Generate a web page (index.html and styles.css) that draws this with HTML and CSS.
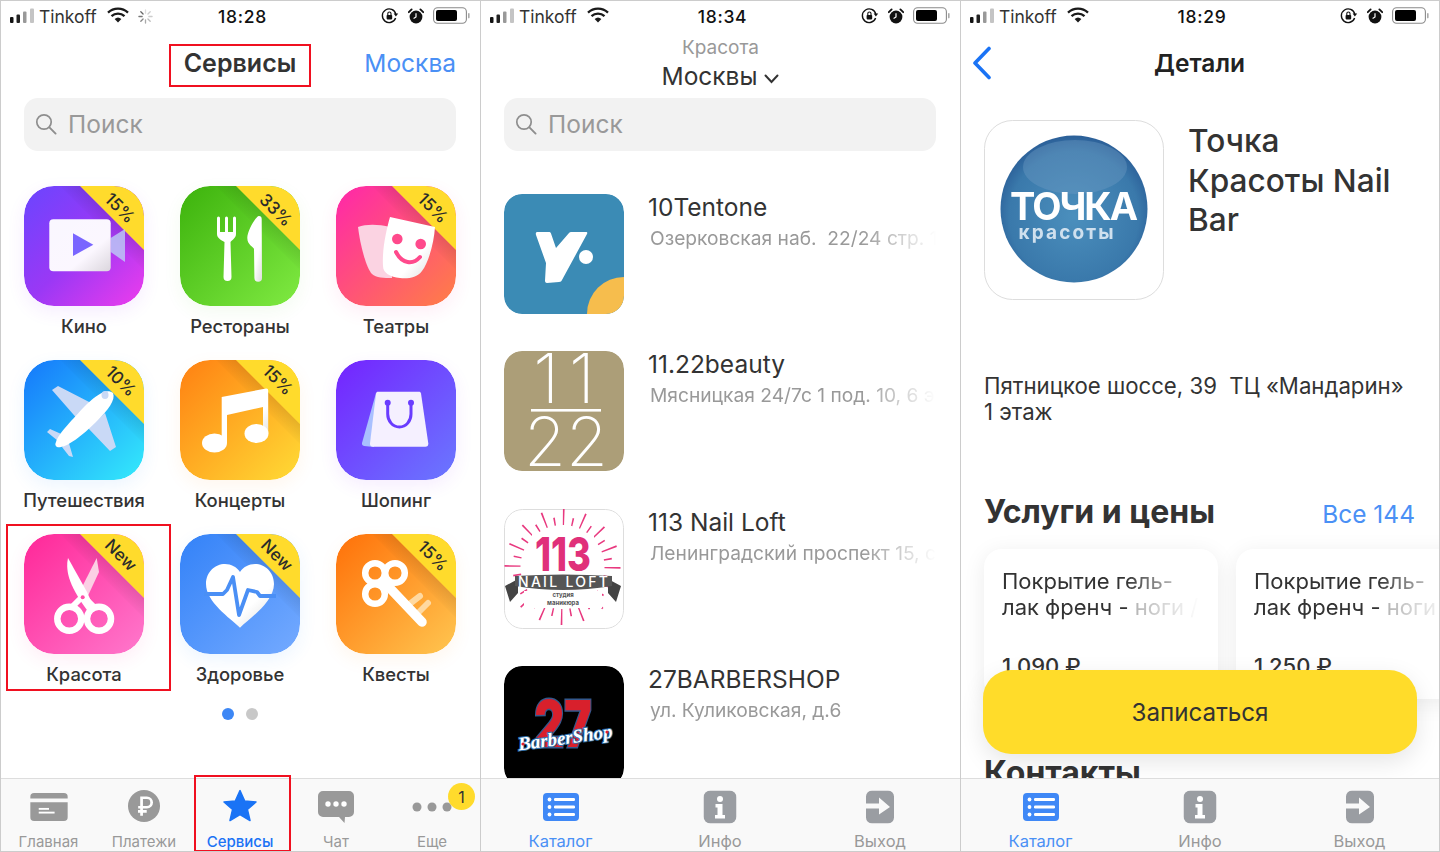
FILE: index.html
```html
<!DOCTYPE html>
<html lang="ru">
<head>
<meta charset="utf-8">
<title>Сервисы</title>
<link rel="stylesheet" href="styles.css">
</head>
<body>
<svg class="defs" width="0" height="0">
  <defs>
    <linearGradient id="gKino" x1="0" y1="0" x2="1" y2="1"><stop offset="0" stop-color="#6a45ff"/><stop offset=".5" stop-color="#9a38f5"/><stop offset="1" stop-color="#ee3cec"/></linearGradient>
    <linearGradient id="gRest" x1="0" y1="0" x2="1" y2="1"><stop offset="0" stop-color="#3cb20c"/><stop offset="1" stop-color="#80ea42"/></linearGradient>
    <linearGradient id="gTeat" x1="0" y1="0" x2="1" y2="1"><stop offset="0" stop-color="#ff26ab"/><stop offset="1" stop-color="#ff7f45"/></linearGradient>
    <linearGradient id="gTrav" x1="0" y1="0" x2="1" y2="1"><stop offset="0" stop-color="#1577fb"/><stop offset="1" stop-color="#34ebfb"/></linearGradient>
    <linearGradient id="gConc" x1="0" y1="0" x2="1" y2="1"><stop offset="0" stop-color="#ff8012"/><stop offset="1" stop-color="#ffdb35"/></linearGradient>
    <linearGradient id="gShop" x1="0" y1="0" x2="1" y2="1"><stop offset="0" stop-color="#7423ff"/><stop offset="1" stop-color="#6a78ff"/></linearGradient>
    <linearGradient id="gBeau" x1="0" y1="0" x2="1" y2="1"><stop offset="0" stop-color="#ff2798"/><stop offset="1" stop-color="#ff78cc"/></linearGradient>
    <linearGradient id="gHeal" x1="0" y1="0" x2="1" y2="1"><stop offset="0" stop-color="#3382f8"/><stop offset="1" stop-color="#74aaff"/></linearGradient>
    <linearGradient id="gQuest" x1="0" y1="0" x2="1" y2="1"><stop offset="0" stop-color="#ff7008"/><stop offset="1" stop-color="#ffc650"/></linearGradient>
    <linearGradient id="gSheen" x1="0" y1="0" x2="1" y2="1"><stop offset="0" stop-color="#fff"/><stop offset=".65" stop-color="#fff"/><stop offset="1" stop-color="#dcdcdc"/></linearGradient>
    <linearGradient id="gShade" gradientUnits="userSpaceOnUse" x1="88" y1="32" x2="76" y2="44"><stop offset="0" stop-color="#000" stop-opacity=".1"/><stop offset="1" stop-color="#000" stop-opacity="0"/></linearGradient>
    <radialGradient id="gBall" cx=".5" cy=".55" r=".55"><stop offset="0" stop-color="#4b8fbd"/><stop offset=".8" stop-color="#3a79ab"/><stop offset="1" stop-color="#2b5f98"/></radialGradient>

    <g id="corner">
      <path d="M36 0 120 84V64L56 0z" fill="url(#gShade)"/>
      <path d="M56 0h64v64z" fill="#ffdb2c"/>
    </g>

    <symbol id="sbar" viewBox="0 0 480 30">
      <rect x="9" y="16" width="3.500" height="6" rx="1" fill="#111"/>
      <rect x="15.500" y="13.500" width="3.500" height="8.500" rx="1" fill="#222"/>
      <rect x="22" y="10.500" width="3.500" height="11.500" rx="1" fill="#999"/>
      <rect x="29" y="7.500" width="4" height="14.500" rx="1" fill="#c4c4c4"/>
    </symbol>
    <symbol id="wifi" viewBox="0 0 22 16">
      <g fill="none" stroke="#1a1a1a" stroke-width="2.300">
        <path d="M1 5.600a14.500 14.500 0 0 1 20 0"/>
        <path d="M4.500 9.200a9.500 9.500 0 0 1 13 0"/>
      </g>
      <path d="M7.600 12a5 5 0 0 1 6.800 0L11 15.600z" fill="#1a1a1a"/>
    </symbol>
    <symbol id="spin" viewBox="0 0 16 16">
      <g stroke-width="1.400" stroke-linecap="round">
        <path d="M8 1v3.400" stroke="#ddd"/><path d="M13 3l-2.400 2.400" stroke="#ccc"/><path d="M15 8h-3.400" stroke="#ccc"/><path d="M13 13l-2.400-2.400" stroke="#bbb"/>
        <path d="M8 15v-3.400" stroke="#aaa"/><path d="M3 13l2.400-2.400" stroke="#888"/><path d="M1 8h3.400" stroke="#777"/><path d="M3 3l2.400 2.400" stroke="#666"/>
      </g>
    </symbol>
    <symbol id="rot" viewBox="0 0 18 18">
      <path d="M14.800 7.200A6.800 6.800 0 1 0 14.600 11" fill="none" stroke="#111" stroke-width="1.400"/>
      <path d="M12.600 6.600h4.600l-2.300 3z" fill="#111"/>
      <rect x="5.600" y="8" width="5.600" height="4.400" rx=".8" fill="#111"/>
      <path d="M6.800 8V6.600a1.600 1.600 0 0 1 3.200 0V8" fill="none" stroke="#111" stroke-width="1.100"/>
    </symbol>
    <symbol id="alarm" viewBox="0 0 16 16">
      <circle cx="8" cy="9" r="6.400" fill="#111"/>
      <path d="M8 5.200V9l-2.400 1.400" fill="none" stroke="#fff" stroke-width="1.200"/>
      <path d="M.8 4.200 3.600 1.400M15.200 4.200 12.400 1.400" stroke="#111" stroke-width="1.800" stroke-linecap="round"/>
    </symbol>
    <symbol id="batt" viewBox="0 0 38 18">
      <rect x=".6" y=".8" width="32.800" height="15.400" rx="4" fill="none" stroke="#8a8a8a" stroke-width="1.100"/>
      <rect x="3" y="3" width="21" height="11" rx="2" fill="#000"/>
      <rect x="35" y="6" width="1.600" height="5.400" rx=".8" fill="#aaa"/>
    </symbol>
    <symbol id="search" viewBox="0 0 22 22">
      <circle cx="9" cy="9" r="7.200" fill="none" stroke="#8e8e8e" stroke-width="1.700"/>
      <path d="M14.400 14.400 20.600 20.600" stroke="#8e8e8e" stroke-width="1.900" stroke-linecap="round"/>
    </symbol>
    <symbol id="catalog" viewBox="0 0 36 28">
      <rect width="36" height="28" rx="4" fill="#3f88f6"/>
      <g fill="#fff">
        <rect x="11" y="5" width="21" height="3" rx="1.200"/><rect x="11" y="12.500" width="21" height="3" rx="1.200"/><rect x="11" y="20" width="21" height="3" rx="1.200"/>
        <circle cx="6.500" cy="6.500" r="1.900"/><circle cx="6.500" cy="14" r="1.900"/><circle cx="6.500" cy="21.500" r="1.900"/>
      </g>
    </symbol>
    <symbol id="info" viewBox="0 0 33 33">
      <rect width="33" height="33" rx="7" fill="#9a9da2"/>
      <circle cx="16.500" cy="8.500" r="3" fill="#fff"/>
      <path d="M12 13.500h7v11h2.500v3.500H11.500v-3.500H14v-7.600h-2z" fill="#fff"/>
    </symbol>
    <symbol id="exit" viewBox="0 0 28 33">
      <path d="M6 0h16a6 6 0 0 1 6 6v21a6 6 0 0 1-6 6H6a6 6 0 0 1-6-6v-9h13v6l11-7.500L13 7v6H0V6a6 6 0 0 1 6-6z" fill="#9a9da2"/>
    </symbol>
    <clipPath id="rr"><rect width="120" height="120" rx="18"/></clipPath>
    <clipPath id="rrApp"><rect width="120" height="120" rx="30"/></clipPath>
  </defs>
</svg>

<div class="screens">

  <section class="phone">
    <div class="status">
      <div class="status-left">
        <svg class="s-signal" viewBox="0 0 34 30"><use href="#sbar" width="480" height="30"/></svg>
        <span>Tinkoff</span>
        <svg class="s-wifi"><use href="#wifi"/></svg>
        <svg class="s-spin"><use href="#spin"/></svg>
      </div>
      <div class="status-time">18:28</div>
      <div class="status-right">
        <svg class="s-rot"><use href="#rot"/></svg>
        <svg class="s-alarm"><use href="#alarm"/></svg>
        <svg class="s-batt"><use href="#batt"/></svg>
      </div>
    </div>
    <header class="nav">
      <span></span>
      <h1 class="nav-title">Сервисы</h1>
      <a class="nav-link">Москва</a>
    </header>
    <main class="body">
      <div class="search"><svg class="search-ico"><use href="#search"/></svg><span>Поиск</span></div>
      <div class="apps">
        <div class="app glow-violet">
          <svg class="app-ico" viewBox="0 0 120 120"><g clip-path="url(#rrApp)"><rect width="120" height="120" fill="url(#gKino)"/>
            <use href="#corner"/>
            <path d="M86.700 52 101 43v33L86.700 66z" fill="#bcd0f5" opacity=".8"/>
            <rect x="25.300" y="33.300" width="61.400" height="52" rx="4" fill="url(#gSheen)" opacity=".96"/>
            <path d="M49 47.300 69.300 58.700 49 70z" fill="#7a66ff"/></g>
            <text class="ribbon" transform="translate(95 23) rotate(45)">15%</text></svg>
          <div class="app-name">Кино</div>
        </div>
        <div class="app glow-green">
          <svg class="app-ico" viewBox="0 0 120 120"><g clip-path="url(#rrApp)"><rect width="120" height="120" fill="url(#gRest)"/>
            <use href="#corner"/>
            <path d="M37 32a1.500 1.500 0 0 1 3 0v14h5V32a1.500 1.500 0 0 1 3 0v14h5V32a1.500 1.500 0 0 1 3 0v16c0 4-4 6-5.500 8l1 35a4 4 0 0 1-8 0l1-35C41 54 37 52 37 48z" fill="#fff"/>
            <path d="M79 30c1.800 0 2.700 1.200 2.700 3l.3 59a3.800 3.800 0 0 1-7.600 0l-.4-29c-.1-2-6.700-4-6.700-11 0-7 8.500-22 11.700-22z" fill="url(#gSheen)"/></g>
            <text class="ribbon" transform="translate(95 25) rotate(45)">33%</text></svg>
          <div class="app-name">Рестораны</div>
        </div>
        <div class="app glow-pink">
          <svg class="app-ico" viewBox="0 0 120 120"><g clip-path="url(#rrApp)"><rect width="120" height="120" fill="url(#gTeat)"/>
            <use href="#corner"/>
            <path d="M22 41c8-3 20-3 32 0l2 51c-8 0-16 0-20-4-6-6-12-30-14-47z" fill="#fbd3e2"/>
            <path d="M54 31c15 3 30 7 45 10-1 15-6 35-13 44-5 7-15 8-22 7-10-1-17-5-17-12-1-16 3-35 7-49z" fill="url(#gSheen)"/>
            <circle cx="61.300" cy="53" r="5.300" fill="#ff4a8c"/><circle cx="84.700" cy="58" r="5.300" fill="#ff4a8c"/>
            <path d="M60 66c6 12 17 13 24 5" fill="none" stroke="#ff4a8c" stroke-width="4" stroke-linecap="round"/></g>
            <text class="ribbon" transform="translate(96 23) rotate(45)">15%</text></svg>
          <div class="app-name">Театры</div>
        </div>
        <div class="app glow-blue">
          <svg class="app-ico" viewBox="0 0 120 120"><g clip-path="url(#rrApp)"><rect width="120" height="120" fill="url(#gTrav)"/>
            <use href="#corner"/>
            <path d="M28 30l6-4 37 19-15 17zM81 53l11 34-6 4-22-23zM23 72l3-3 18 8-5 8zM44 80l5 17-4-1-7-9z" fill="#c9d9f6"/>
            <path d="M89 33C92 40 84 50 72 62 58 76 44 86 37 87 33 88 30 86 32 82 34 74 50 58 60 47 70 37 82 27 89 33z" fill="url(#gSheen)"/>
            <ellipse cx="81" cy="35" rx="3.500" ry="4" fill="#c9d9f6"/></g>
            <text class="ribbon" transform="translate(96 22) rotate(45)">10%</text></svg>
          <div class="app-name">Путешествия</div>
        </div>
        <div class="app glow-orange">
          <svg class="app-ico" viewBox="0 0 120 120"><g clip-path="url(#rrApp)"><rect width="120" height="120" fill="url(#gConc)"/>
            <use href="#corner"/>
            <path d="M41.700 37 86 28.500c1.500-.2 2.200.8 2.200 2V73H83V47L47 55v28h-5.300z" fill="url(#gSheen)"/>
            <ellipse cx="34.500" cy="83" rx="12.500" ry="9.500" fill="#fff"/><ellipse cx="76.500" cy="73.500" rx="12" ry="9.500" fill="#fff"/></g>
            <text class="ribbon" transform="translate(97 21) rotate(45)">15%</text></svg>
          <div class="app-name">Концерты</div>
        </div>
        <div class="app glow-violet">
          <svg class="app-ico" viewBox="0 0 120 120"><g clip-path="url(#rrApp)"><rect width="120" height="120" fill="url(#gShop)"/>
            <path d="M40 33 26 83c-.3 1.500.5 2.500 2 3l10 1z" fill="#a9c0ff"/>
            <path d="M42 31.700h41c1 0 1.800.6 2 1.700l7.300 50c.2 2-1 3.300-3 3.300H37c-2 0-3.200-1.300-3-3.300l6-50c.2-1 1-1.700 2-1.700z" fill="#f5f0ff"/>
            <path d="M51.700 42.700V54c0 7 5 13 11.700 13S75 61 75 54V42.700" fill="none" stroke="#6a3cff" stroke-width="3"/>
            <circle cx="51.700" cy="42.700" r="3" fill="#6a3cff"/><circle cx="75" cy="42.700" r="3" fill="#6a3cff"/></g></svg>
          <div class="app-name">Шопинг</div>
        </div>
        <div class="app glow-pink">
          <svg class="app-ico" viewBox="0 0 120 120"><g clip-path="url(#rrApp)"><rect width="120" height="120" fill="url(#gBeau)"/>
            <use href="#corner"/>
            <path d="M72.700 24 75 38 62 66 54 61z" fill="#fbcfe4"/>
            <path d="M44 24C41 38 46 54 66 80l5-4-8-18z" fill="#fff"/>
            <path d="M55 66 49 72M63 66 69 72" stroke="#fff" stroke-width="6" stroke-linecap="round"/>
            <circle cx="45.300" cy="84.700" r="12" fill="none" stroke="#fff" stroke-width="6.500"/>
            <circle cx="75" cy="84.700" r="12" fill="none" stroke="#fff" stroke-width="6.500"/>
            <circle cx="58.700" cy="63.300" r="2" fill="#ff4fa8"/></g>
            <text class="ribbon" transform="translate(96 22) rotate(45)">New</text></svg>
          <div class="app-name">Красота</div>
        </div>
        <div class="app glow-blue">
          <svg class="app-ico" viewBox="0 0 120 120"><g clip-path="url(#rrApp)"><rect width="120" height="120" fill="url(#gHeal)"/>
            <use href="#corner"/>
            <path d="M60 93.700C50 84 26 68 26 50c0-12 9-20 19-20 6 0 12 3 15 8 3-5 9-8 15-8 10 0 19 8 19 20 0 18-24 34-34 43.700z" fill="url(#gSheen)"/>
            <path d="M24 60h19l4-4 6-13 6 38 9-25 9 2 3 4h16" fill="none" stroke="#4a8ff5" stroke-width="3.800" stroke-linejoin="round"/></g>
            <text class="ribbon" transform="translate(96 22) rotate(45)">New</text></svg>
          <div class="app-name">Здоровье</div>
        </div>
        <div class="app glow-orange">
          <svg class="app-ico" viewBox="0 0 120 120"><g clip-path="url(#rrApp)"><rect width="120" height="120" fill="url(#gQuest)"/>
            <use href="#corner"/>
            <path d="M72.300 71 84 62M82 79 92 69" stroke="#ffd9a0" stroke-width="6" stroke-linecap="round"/>
            <path d="M50 50 86 88" stroke="#fff" stroke-width="9.500" stroke-linecap="round"/>
            <circle cx="49" cy="49" r="7" fill="#fff"/>
            <circle cx="39" cy="39" r="9.800" fill="none" stroke="#fff" stroke-width="6.500"/>
            <circle cx="59" cy="39" r="9.800" fill="none" stroke="#fff" stroke-width="6.500"/>
            <circle cx="39" cy="60" r="9.800" fill="none" stroke="#fff" stroke-width="6.500"/></g>
            <text class="ribbon" transform="translate(96 23) rotate(45)">15%</text></svg>
          <div class="app-name">Квесты</div>
        </div>
      </div>
      <div class="pager"><i class="dot dot-on"></i><i class="dot"></i></div>
    </main>
    <nav class="tabs tabs-5">
      <div class="tab">
        <svg class="tab-ico" width="39" height="28" viewBox="0 0 40 30"><path d="M4 0h32a4 4 0 0 1 4 4v2H0V4a4 4 0 0 1 4-4zM0 10h40v16a4 4 0 0 1-4 4H4a4 4 0 0 1-4-4z" fill="#999"/><rect x="9" y="16" width="11" height="2" fill="#fff"/><rect x="9" y="20" width="17" height="2" fill="#fff"/></svg>
        <span>Главная</span>
      </div>
      <div class="tab">
        <svg class="tab-ico tab-ico-up" width="33" height="33" viewBox="0 0 34 34"><circle cx="17" cy="17" r="16.500" fill="#999"/><path d="M14.500 27V8.500H20a4.800 4.800 0 0 1 0 9.800h-9M10.800 22.500h9" fill="none" stroke="#fff" stroke-width="2.800"/></svg>
        <span>Платежи</span>
      </div>
      <div class="tab tab-on">
        <svg class="tab-ico tab-ico-up" width="34" height="33" viewBox="0 0 34 33"><path d="M17 1l4.600 10.400 11.400 1-8.600 7.500 2.600 11.100L17 25.200 7 31l2.600-11.100L1 12.400l11.400-1z" fill="#1a73f5" stroke="#1a73f5" stroke-width="1.500" stroke-linejoin="round"/></svg>
        <span>Сервисы</span>
      </div>
      <div class="tab">
        <svg class="tab-ico" width="36" height="32" viewBox="0 0 36 32"><path d="M5 0h26a5 5 0 0 1 5 5v16a5 5 0 0 1-5 5h-4l-.5 6-5.500-6H5a5 5 0 0 1-5-5V5a5 5 0 0 1 5-5z" fill="#999"/><circle cx="10" cy="13" r="2.700" fill="#fff"/><circle cx="18" cy="13" r="2.700" fill="#fff"/><circle cx="26" cy="13" r="2.700" fill="#fff"/></svg>
        <span>Чат</span>
      </div>
      <div class="tab">
        <svg class="tab-ico" width="40" height="10" viewBox="0 0 40 10"><circle cx="5" cy="5" r="4.500" fill="#999"/><circle cx="20" cy="5" r="4.500" fill="#999"/><circle cx="35" cy="5" r="4.500" fill="#999"/></svg>
        <span>Еще</span>
        <b class="badge">1</b>
      </div>
    </nav>
    <div class="mark mark-title"></div>
    <div class="mark mark-app"></div>
    <div class="mark mark-tab"></div>
  </section>

  <section class="phone">
    <div class="status">
      <div class="status-left">
        <svg class="s-signal" viewBox="0 0 34 30"><use href="#sbar" width="480" height="30"/></svg>
        <span>Tinkoff</span>
        <svg class="s-wifi"><use href="#wifi"/></svg>
      </div>
      <div class="status-time">18:34</div>
      <div class="status-right">
        <svg class="s-rot"><use href="#rot"/></svg>
        <svg class="s-alarm"><use href="#alarm"/></svg>
        <svg class="s-batt"><use href="#batt"/></svg>
      </div>
    </div>
    <header class="nav-stack">
      <div class="nav-sub">Красота</div>
      <div class="nav-city">Москвы
        <svg class="chev" width="15" height="10" viewBox="0 0 15 10"><path d="M1.500 1.500 7.500 8l6-6.500" fill="none" stroke="#333" stroke-width="2" stroke-linecap="round"/></svg>
      </div>
    </header>
    <main class="body">
      <div class="search"><svg class="search-ico"><use href="#search"/></svg><span>Поиск</span></div>
      <div class="list">
        <article class="item">
          <svg class="logo" viewBox="0 0 120 120"><g clip-path="url(#rr)"><rect width="120" height="120" fill="#3b8bb5"/><circle cx="120" cy="120" r="37" fill="#f6bd4d"/>
            <path d="M33 38h12c1 0 1.800.5 2 1.500L52 54l13-15c.8-.8 1.500-1 2.500-1H82c1.500 0 1.500 1 1 2L58 86c-.5 1.200-1.200 2-3 2l-12 1c-1.500 0-2-1-2-2.500l1-17.500L32 41c-.5-1.500 0-3 1-3z" fill="#fff"/><circle cx="82" cy="63" r="7" fill="#fff"/></g></svg>
          <div class="item-text"><h2>10Tentone</h2><p>Озерковская наб.&nbsp; 22/24 стр. 1</p></div>
        </article>
        <article class="item">
          <svg class="logo" viewBox="0 0 120 120"><g clip-path="url(#rr)"><rect width="120" height="120" fill="#ac9e78"/>
            <text class="thin" x="60" y="52">1<tspan dx="10">1</tspan></text><rect x="27" y="58" width="70" height="2.600" fill="#fff"/><text class="thin" x="62" y="115">22</text></g></svg>
          <div class="item-text"><h2>11.22beauty</h2><p>Мясницкая 24/7с 1 под. 10, 6 этаж</p></div>
        </article>
        <article class="item">
          <svg class="logo logo-line" viewBox="0 0 120 120"><rect x=".5" y=".5" width="119" height="119" rx="18" fill="#fff" stroke="#ddd"/>
            <circle cx="58.500" cy="58" r="50" fill="none" stroke="#e8397f" stroke-width="16" stroke-dasharray="1.500 18.135"/>
            <circle cx="58.500" cy="58" r="46" fill="none" stroke="#e8397f" stroke-width="8" stroke-dasharray="1.500 16.564" stroke-dashoffset="9"/>
            <rect x="28" y="24" width="62" height="40" fill="#fff"/><rect x="20" y="82" width="78" height="17" fill="#fff"/>
            <text class="t113" x="59" y="62" textLength="56" lengthAdjust="spacingAndGlyphs">113</text>
            <path d="M1 77 14 70V84L6 93zM117 77 104 70V84L112 93z" fill="#444"/>
            <path d="M11 67Q59 64 108 67V77Q59 85 11 77z" fill="#555"/>
            <text class="tnail" x="59" y="78" textLength="90">NAIL LOFT</text>
            <text class="tsmall" x="59" y="88">студия</text>
            <text class="tsmall" x="59" y="96">маникюра</text></svg>
          <div class="item-text"><h2>113 Nail Loft</h2><p>Ленинградский проспект 15, строение</p></div>
        </article>
        <article class="item">
          <svg class="logo" viewBox="0 0 120 120"><rect width="120" height="120" rx="18" fill="#000"/>
            <text class="t27" x="59" y="81" textLength="57" lengthAdjust="spacingAndGlyphs">27</text>
            <text class="tbarber" transform="translate(62 78) rotate(-8)">BarberShop</text>
            <circle cx="19" cy="78" r="1.600" fill="#e21f2c"/><circle cx="103" cy="66" r="1.600" fill="#e21f2c"/></svg>
          <div class="item-text"><h2>27BARBERSHOP</h2><p>ул. Куликовская, д.6</p></div>
        </article>
      </div>
    </main>
    <nav class="tabs tabs-3">
      <div class="tab tab-active2"><svg class="tab-ico" width="36" height="28"><use href="#catalog"/></svg><span>Каталог</span></div>
      <div class="tab"><svg class="tab-ico" width="33" height="33"><use href="#info"/></svg><span>Инфо</span></div>
      <div class="tab"><svg class="tab-ico" width="28" height="33"><use href="#exit"/></svg><span>Выход</span></div>
    </nav>
  </section>

  <section class="phone">
    <div class="status">
      <div class="status-left">
        <svg class="s-signal" viewBox="0 0 34 30"><use href="#sbar" width="480" height="30"/></svg>
        <span>Tinkoff</span>
        <svg class="s-wifi"><use href="#wifi"/></svg>
      </div>
      <div class="status-time">18:29</div>
      <div class="status-right">
        <svg class="s-rot"><use href="#rot"/></svg>
        <svg class="s-alarm"><use href="#alarm"/></svg>
        <svg class="s-batt"><use href="#batt"/></svg>
      </div>
    </div>
    <header class="nav nav-detail">
      <svg class="back" width="20" height="34" viewBox="0 0 20 34"><path d="M17 2.500 3 17l14 14.500" fill="none" stroke="#1a73f5" stroke-width="3.600" stroke-linecap="round" stroke-linejoin="round"/></svg>
      <h1 class="nav-title nav-title-dark">Детали</h1>
      <span></span>
    </header>
    <main class="body body-detail">
      <div class="hero">
        <svg class="hero-logo" viewBox="0 0 180 180"><rect x=".5" y=".5" width="179" height="179" rx="28" fill="#fff" stroke="#ddd"/>
          <g class="soft">
            <circle cx="90" cy="89" r="73.500" fill="url(#gBall)"/>
            <ellipse cx="91" cy="47" rx="52" ry="27" fill="#6e9cc4" opacity=".4"/>
            <text class="tochka" x="90" y="100" textLength="128">ТОЧКА</text>
            <text class="krasoty" x="82" y="119" textLength="95">красоты</text>
          </g></svg>
        <h2 class="hero-title">Точка Красоты Nail Bar</h2>
      </div>
      <p class="address">Пятницкое шоссе, 39&nbsp; ТЦ «Мандарин»<br>1 этаж</p>
      <div class="sec-head"><h2>Услуги и цены</h2><a class="nav-link link-all">Все 144</a></div>
      <div class="cards">
        <div class="card"><p class="card-name">Покрытие гель-лак френч - <span class="mute">ноги / </span></p><p class="price">1 090 ₽</p></div>
        <div class="card"><p class="card-name">Покрытие гель-лак френч - <span class="mute">ноги / </span></p><p class="price">1 250 ₽</p></div>
      </div>
      <h2 class="contacts">Контакты</h2>
    </main>
    <button class="book">Записаться</button>
    <nav class="tabs tabs-3">
      <div class="tab tab-active2"><svg class="tab-ico" width="36" height="28"><use href="#catalog"/></svg><span>Каталог</span></div>
      <div class="tab"><svg class="tab-ico" width="33" height="33"><use href="#info"/></svg><span>Инфо</span></div>
      <div class="tab"><svg class="tab-ico" width="28" height="33"><use href="#exit"/></svg><span>Выход</span></div>
    </nav>
  </section>

</div>
</body>
</html>
```

FILE: styles.css
```css
* { box-sizing: border-box; }
html, body { margin: 0; padding: 0; background: #fff; }
body { width: 1440px; height: 852px; overflow: hidden; font-family: "Inter", "Noto Sans", sans-serif; color: #333; }
.defs { position: absolute; }
h1, h2, p { margin: 0; }

.screens { display: flex; width: 1440px; height: 852px; border-top: 1px solid #ccc; border-bottom: 1px solid #ccc; border-right: 1px solid #ccc; }
.phone { position: relative; width: 480px; height: 100%; flex: none; display: flex; flex-direction: column; border-left: 1px solid #ccc; overflow: hidden; background: #fff; }
.phone:last-child { width: 479px; }

.status { display: grid; grid-template-columns: 1fr auto 1fr; align-items: center; height: 28px; padding: 0 10px 2px 0; flex: none; }
.status-left { display: flex; align-items: center; font-size: 17.500px; color: #333; }
.status-left span { margin-left: 6px; }
.s-signal { width: 34px; height: 30px; margin-right: -2px; }
.s-wifi { width: 22px; height: 16px; margin-left: 10px; margin-top: -3px; }
.s-spin { width: 15px; height: 15px; margin-left: 9px; }
.status-time { font-size: 17.500px; font-weight: 500; color: #111; letter-spacing: .7px; padding-left: 14px; }
.status-right { display: flex; align-items: center; justify-content: flex-end; }
.s-rot { width: 18px; height: 18px; }
.s-alarm { width: 16px; height: 16px; margin-left: 9px; }
.s-batt { width: 38px; height: 18px; margin-left: 9px; margin-right: -1px; }

.nav { display: grid; grid-template-columns: 1fr auto 1fr; align-items: center; height: 64px; padding: 3px 24px 0 23px; flex: none; }
.nav-title { font-size: 25px; font-weight: 600; color: #333; margin: 0; }
.nav-title-dark { font-size: 24.500px; color: #222; }
.nav-link { justify-self: end; font-size: 24.500px; color: #4a90f5; }
.nav-detail { padding-left: 11px; padding-right: 12px; }

.nav-stack { display: flex; flex-direction: column; align-items: center; height: 64px; padding-top: 8px; flex: none; }
.nav-sub { font-size: 19px; line-height: 22px; color: #999; }
.nav-city { display: flex; align-items: center; gap: 7px; font-size: 24.500px; line-height: 32px; color: #333; margin-top: 1px; }
.chev { margin-top: 5px; }

.body { flex: 1; min-height: 0; overflow: hidden; padding: 5px 24px 0 23px; }
.search { display: flex; align-items: center; height: 53px; border-radius: 14px; background: #f2f2f2; padding: 0 0 2px 11px; font-size: 24.500px; color: #999; }
.search-ico { width: 22px; height: 22px; margin-right: 11px; }

.apps { display: grid; grid-template-columns: repeat(3, 120px); column-gap: 36px; grid-auto-rows: 174px; margin-top: 35px; }
.app { display: flex; flex-direction: column; align-items: center; }
.app-ico { width: 120px; height: 120px; border-radius: 30px; flex: none; }
.glow-violet .app-ico { box-shadow: 0 6px 18px rgba(150, 60, 250, .09); }
.glow-green .app-ico { box-shadow: 0 6px 18px rgba(80, 200, 40, .07); }
.glow-pink .app-ico { box-shadow: 0 6px 18px rgba(255, 50, 150, .09); }
.glow-blue .app-ico { box-shadow: 0 6px 18px rgba(40, 140, 250, .09); }
.glow-orange .app-ico { box-shadow: 0 6px 18px rgba(255, 140, 30, .08); }
.app-name { width: 156px; margin-top: 9px; text-align: center; font-size: 18.400px; line-height: 22px; font-weight: 500; color: #333; white-space: nowrap; }
.ribbon { font-size: 17px; font-weight: 500; fill: #2b2b2b; text-anchor: middle; dominant-baseline: middle; }

.pager { display: flex; justify-content: center; gap: 12px; height: 12px; }
.dot { width: 12px; height: 12px; border-radius: 50%; background: #c8c8c8; }
.dot-on { background: #3d87f5; }

.tabs { position: relative; display: grid; height: 73px; flex: none; background: #f9f9f9; border-top: 1px solid #ddd; }
.tabs-5 { grid-template-columns: 95px repeat(4, 96px); font-size: 15px; }
.tabs-3 { grid-template-columns: 159px 160px 1fr; font-size: 16.500px; }
.tab { position: relative; display: flex; flex-direction: column; align-items: center; justify-content: flex-end; line-height: 20px; color: #999; }
.tabs-5 .tab span { margin-bottom: -1px; }
.tab-ico { position: absolute; top: 50%; left: 50%; transform: translate(-50%, -50%); margin-top: -8px; }
.tab-ico-up { margin-top: -9px; }
.tab-on { color: #1a73f5; font-weight: 500; }
.tab-active2 { color: #4a90f5; }
.badge { position: absolute; top: 4px; right: 5px; display: flex; align-items: center; justify-content: center; width: 27px; height: 27px; border-radius: 50%; background: #ffdb2c; color: #333; font-size: 16px; font-weight: 400; }

.mark { position: absolute; border: 2px solid #f01020; pointer-events: none; }
.mark-title { left: 168px; top: 43px; width: 142px; height: 43px; }
.mark-app { left: 5px; top: 523px; width: 165px; height: 167px; }
.mark-tab { left: 193px; top: 774px; width: 97px; height: 77px; }

.list { display: flex; flex-direction: column; margin-top: 43px; }
.item { display: flex; gap: 24px; height: 157.300px; flex: none; }
.logo { width: 120px; height: 120px; flex: none; border-radius: 18px; }
.item-text { flex: 1; min-width: 0; margin-top: -1px; }
.item-text h2 { font-size: 24.500px; font-weight: 400; line-height: 28px; color: #333; white-space: nowrap; }
.item-text p { margin: 4px 0 0 2px; font-size: 19.200px; line-height: 26px; color: #999; white-space: nowrap; overflow: hidden; -webkit-mask-image: linear-gradient(90deg, #000 74%, transparent 100%); mask-image: linear-gradient(90deg, #000 74%, transparent 100%); }

.thin { font-size: 68px; font-weight: 200; fill: #fff; text-anchor: middle; }
.t113 { font-size: 47px; font-weight: 800; fill: #e0307a; text-anchor: middle; }
.tnail { font-size: 14px; font-weight: 500; fill: #fff; text-anchor: middle; }
.tsmall { font-size: 6px; font-weight: 700; fill: #555; text-anchor: middle; }
.t27 { font-size: 64px; font-weight: 900; fill: #d8202c; stroke: #34588c; stroke-width: 3px; paint-order: stroke; text-anchor: middle; }
.tbarber { font-family: "Liberation Serif", serif; font-size: 19px; font-style: italic; font-weight: 700; fill: #fff; stroke: #2f6ea8; stroke-width: 2px; paint-order: stroke; text-anchor: middle; }

.body-detail { padding-top: 27px; }
.hero { display: flex; gap: 24px; }
.hero-logo { width: 180px; height: 180px; flex: none; }
.soft { filter: blur(.6px); }
.hero-title { flex: 1; font-size: 31.600px; font-weight: 500; line-height: 39.500px; color: #333; padding-top: 1px; padding-right: 10px; }
.tochka { font-size: 38px; font-weight: 700; fill: #fff; text-anchor: middle; }
.krasoty { font-size: 19px; font-weight: 700; fill: #cfe0ee; text-anchor: middle; }
.address { margin-top: 73px; font-size: 22.200px; line-height: 26px; color: #333; white-space: nowrap; }
.sec-head { display: flex; justify-content: space-between; align-items: center; margin-top: 67px; }
.sec-head h2 { font-size: 32px; font-weight: 700; line-height: 40px; color: #333; }
.link-all { margin-top: 4px; }
.cards { display: flex; gap: 18px; margin-top: 17px; width: 520px; }
.card { width: 234px; height: 150px; flex: none; border-radius: 18px; background: #fff; box-shadow: 0 4px 22px rgba(0, 0, 0, .08); padding: 19px 18px 0; overflow: hidden; }
.card-name { font-size: 22px; line-height: 26px; color: #333; height: 52px; overflow: hidden; -webkit-mask-image: linear-gradient(90deg, #000 62%, transparent 100%); mask-image: linear-gradient(90deg, #000 62%, transparent 100%); }
.mute { color: #aaa; }
.price { margin-top: 33px; font-size: 22px; line-height: 26px; font-weight: 500; color: #333; }
.contacts { margin-top: 54px; font-size: 32px; font-weight: 700; line-height: 40px; color: #333; }
.book { position: absolute; left: 22px; top: 669px; width: 434px; height: 84px; border: 0; border-radius: 28px; background: #ffdc2a; box-shadow: 0 8px 24px rgba(0, 0, 0, .1); font: 400 24.200px "Inter", "Noto Sans", sans-serif; color: #333; }
```
